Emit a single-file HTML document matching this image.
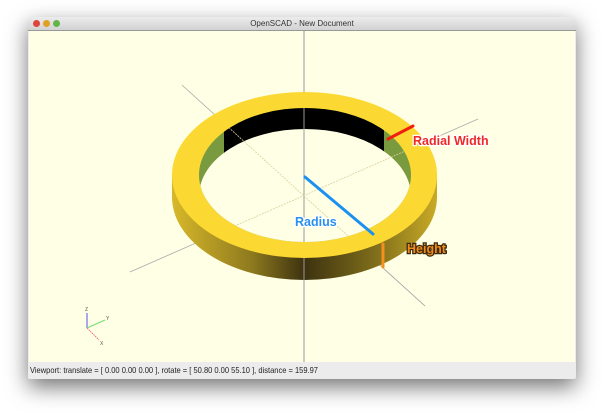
<!DOCTYPE html>
<html><head><meta charset="utf-8"><style>
html,body{margin:0;padding:0;background:#fff;}
body{width:605px;height:417px;position:relative;overflow:hidden;font-family:"Liberation Sans",sans-serif;}
.win{position:absolute;left:28px;top:17px;width:548px;height:362px;background:#ececec;box-shadow:0 8px 22px rgba(0,0,0,0.55);border-radius:4px 4px 2px 2px;}
.title{position:absolute;left:0;top:0;width:100%;height:13px;background:linear-gradient(#ececec,#d2d2d2);border-bottom:1px solid #999;border-radius:4px 4px 0 0;font-size:8px;color:#333;text-align:center;line-height:13px;}
.dot{position:absolute;top:3px;width:7px;height:7px;border-radius:50%;}
</style></head><body>
<div class="win">
<div class="title">OpenSCAD - New Document
<div class="dot" style="left:5px;background:#e0443e"></div>
<div class="dot" style="left:15px;background:#dea123"></div>
<div class="dot" style="left:25px;background:#62b548"></div>
</div>
</div>
<svg width="605" height="417" style="position:absolute;left:0;top:0">
<defs>
<clipPath id="hole"><ellipse cx="305" cy="175" rx="106" ry="67"/></clipPath>
<linearGradient id="side" x1="172" x2="437" y1="0" y2="0" gradientUnits="userSpaceOnUse">
<stop offset="0" stop-color="#d8b82a"/><stop offset="0.3" stop-color="#8e7a1e"/><stop offset="0.5" stop-color="#3d3210"/><stop offset="0.75" stop-color="#7a6a1a"/><stop offset="1" stop-color="#c9aa26"/>
</linearGradient>
</defs>
<rect x="29" y="31" width="546" height="331" fill="#ffffe5"/>
<line x1="304" y1="31" x2="304" y2="362" stroke="#999" stroke-width="1"/>
<line x1="182" y1="85" x2="425" y2="306" stroke="#aaa" stroke-width="0.8"/>
<line x1="130" y1="272" x2="478" y2="119" stroke="#aaa" stroke-width="0.8"/>
<!-- ring side -->
<path d="M172,175 L172,197 A132.5,83 0 0 0 437,197 L437,175 Z" fill="url(#side)"/>
<!-- top face -->
<ellipse cx="304.5" cy="175" rx="132.5" ry="83" fill="#fbd932"/>
<!-- hole -->
<g clip-path="url(#hole)">
<rect x="190" y="100" width="230" height="150" fill="#7a9a40"/>
<rect x="224" y="100" width="160" height="60" fill="#000"/>
<ellipse cx="305" cy="196" rx="106" ry="67" fill="#ffffe5"/>
<line x1="304" y1="31" x2="304" y2="362" stroke="#999" stroke-width="1"/>
<line x1="182" y1="85" x2="425" y2="306" stroke="#d8d0a0" stroke-width="0.8" stroke-dasharray="2,1"/>
<line x1="130" y1="272" x2="478" y2="119" stroke="#d8d0a0" stroke-width="0.8" stroke-dasharray="2,1"/>
</g>
<line x1="304" y1="258" x2="304" y2="362" stroke="#999" stroke-width="1"/>
<line x1="384" y1="269" x2="425" y2="306" stroke="#aaa" stroke-width="0.8"/>
<!-- bars -->
<line x1="388" y1="139" x2="413" y2="126" stroke="#f02010" stroke-width="3" stroke-linecap="round"/>
<line x1="305" y1="177" x2="373" y2="234" stroke="#1a90f0" stroke-width="3" stroke-linecap="round"/>
<line x1="383" y1="244" x2="383" y2="267" stroke="#f59020" stroke-width="3" stroke-linecap="round"/>
<g font-family="Liberation Sans, sans-serif" font-weight="bold" font-size="12.5">
<text x="413" y="145" fill="#f02828" stroke="#fff" stroke-width="2.5" paint-order="stroke">Radial Width</text>
<text x="295" y="226" fill="#2a90f0" stroke="#fff" stroke-width="2.5" paint-order="stroke">Radius</text>
<text x="407" y="253" fill="#f08a1a" stroke="#3a2a10" stroke-width="2.5" paint-order="stroke">Height</text>
</g>
<!-- gizmo -->
<line x1="87" y1="328" x2="87" y2="313" stroke="#5050f0" stroke-width="1"/>
<line x1="87" y1="328" x2="105" y2="320" stroke="#70e070" stroke-width="1"/>
<line x1="87" y1="328" x2="99" y2="340" stroke="#f07070" stroke-width="1" stroke-dasharray="1.5,0.8"/>
<g font-size="5" fill="#555" font-family="Liberation Sans, sans-serif"><text x="85" y="311">Z</text><text x="106" y="320">Y</text><text x="100" y="345">X</text></g>
<!-- status -->
<text x="30" y="373" font-size="8.5" fill="#222" font-family="Liberation Sans, sans-serif" textLength="288" lengthAdjust="spacingAndGlyphs">Viewport: translate = [ 0.00 0.00 0.00 ], rotate = [ 50.80 0.00 55.10 ], distance = 159.97</text>
</svg>
</body></html>
